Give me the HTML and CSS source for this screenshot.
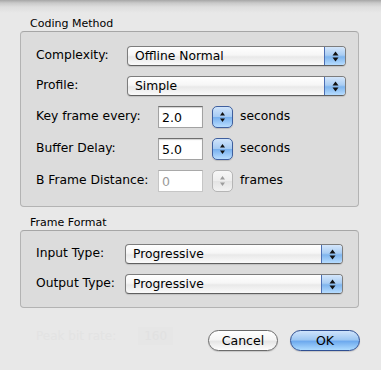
FILE: index.html
```html
<!DOCTYPE html>
<html>
<head>
<meta charset="utf-8">
<link rel="stylesheet" href="styles.css">
</head>
<body>
<div class="page">
  <div class="group-title">Coding Method</div>
  <div class="group g1">
    <div class="row">
      <span class="label w91">Complexity:</span>
      <div class="popup"><span class="popup-text">Offline Normal</span><span class="popup-arrows"><svg width="7" height="11" viewBox="0 0 7 11"><polygon points="3.5,0.5 6.5,4.5 0.5,4.5"/><polygon points="0.5,6.5 6.5,6.5 3.5,10.5"/></svg></span></div>
    </div>
    <div class="row">
      <span class="label w91">Profile:</span>
      <div class="popup"><span class="popup-text">Simple</span><span class="popup-arrows"><svg width="7" height="11" viewBox="0 0 7 11"><polygon points="3.5,0.5 6.5,4.5 0.5,4.5"/><polygon points="0.5,6.5 6.5,6.5 3.5,10.5"/></svg></span></div>
    </div>
    <div class="row tall">
      <span class="label w122">Key frame every:</span>
      <div class="field">2.0</div>
      <div class="stepper"><svg width="7" height="12" viewBox="0 0 7 12"><polygon points="3.5,1 6,4.5 1,4.5"/><polygon points="1,7.5 6,7.5 3.5,11"/></svg></div>
      <span class="unit">seconds</span>
    </div>
    <div class="row tall">
      <span class="label w122">Buffer Delay:</span>
      <div class="field">5.0</div>
      <div class="stepper"><svg width="7" height="12" viewBox="0 0 7 12"><polygon points="3.5,1 6,4.5 1,4.5"/><polygon points="1,7.5 6,7.5 3.5,11"/></svg></div>
      <span class="unit">seconds</span>
    </div>
    <div class="row tall">
      <span class="label w122">B Frame Distance:</span>
      <div class="field disabled">0</div>
      <div class="stepper disabled"><svg width="7" height="12" viewBox="0 0 7 12"><polygon points="3.5,1 6,4.5 1,4.5"/><polygon points="1,7.5 6,7.5 3.5,11"/></svg></div>
      <span class="unit">frames</span>
    </div>
  </div>

  <div class="group-title second">Frame Format</div>
  <div class="group g2">
    <div class="row">
      <span class="label w89">Input Type:</span>
      <div class="popup"><span class="popup-text">Progressive</span><span class="popup-arrows"><svg width="7" height="11" viewBox="0 0 7 11"><polygon points="3.5,0.5 6.5,4.5 0.5,4.5"/><polygon points="0.5,6.5 6.5,6.5 3.5,10.5"/></svg></span></div>
    </div>
    <div class="row">
      <span class="label w89">Output Type:</span>
      <div class="popup"><span class="popup-text">Progressive</span><span class="popup-arrows"><svg width="7" height="11" viewBox="0 0 7 11"><polygon points="3.5,0.5 6.5,4.5 0.5,4.5"/><polygon points="0.5,6.5 6.5,6.5 3.5,10.5"/></svg></span></div>
    </div>
  </div>

  <div class="footer">
    <div class="ghost">
      <span class="ghost-label">Peak bit rate:</span>
      <span class="ghost-field">160</span>
    </div>
    <div class="buttons">
      <button class="btn">Cancel</button>
      <button class="btn default">OK</button>
    </div>
  </div>
</div>
</body>
</html>
```
FILE: styles.css
```css
html, body {
  margin: 0;
  padding: 0;
}
body {
  width: 381px;
  height: 370px;
  overflow: hidden;
  background: linear-gradient(#a6a6a6 0px, #c9c9c9 3px, #dedede 7px, #e8e8e8 13px, #e8e8e8 100%);
  font-family: "DejaVu Sans", "Liberation Sans", sans-serif;
  color: #000;
}
.page {
  padding: 17px 22px 0 20px;
}
.group-title {
  font-size: 11px;
  line-height: 13px;
  height: 13px;
  margin: 0 0 1px 10px;
}
.group-title.second {
  margin-top: 9px;
}
.group {
  border: 1px solid #b3b3b3;
  border-top-color: #a6a6a6;
  border-radius: 4px;
  background: #dcdcdc;
  display: flex;
  flex-direction: column;
  gap: 10px;
}
.g1 {
  padding: 14px 12px 14px 15px;
}
.g2 {
  padding: 13px 15px 13px 15px;
}
.row {
  display: flex;
  align-items: center;
  height: 20px;
  font-size: 12.3px;
}
.row.tall {
  height: 22px;
}
.label {
  flex: none;
  position: relative;
  top: -1px;
}
.w91 { width: 91px; }
.w89 { width: 89px; }
.w122 { width: 122px; }

.popup {
  flex: 1;
  display: flex;
  height: 20px;
  box-sizing: border-box;
  border: 1px solid #7d7d7d;
  border-bottom-color: #5f5f5f;
  border-radius: 4px;
  overflow: hidden;
  background: linear-gradient(#ffffff 0%, #f6f6f6 45%, #e9e9e9 55%, #fafafa 100%);
  box-shadow: 0 1px 1px rgba(0, 0, 0, 0.12);
}
.popup-text {
  flex: 1;
  padding-left: 7px;
  line-height: 18px;
}
.popup-arrows {
  width: 20px;
  flex: none;
  display: flex;
  align-items: center;
  justify-content: center;
  border-left: 1px solid #4c6fb3;
  background: linear-gradient(#d4e6fb 0%, #a9cdf3 45%, #7fb5ee 55%, #b6dcff 100%);
}
.popup-arrows svg polygon,
.stepper svg polygon {
  fill: #111;
}

.field {
  width: 45px;
  height: 22px;
  box-sizing: border-box;
  flex: none;
  background: #fff;
  border: 1px solid #a2a2a2;
  border-top-color: #6e6e6e;
  box-shadow: inset 0 1px 1px rgba(0, 0, 0, 0.18);
  padding-left: 3px;
  line-height: 21px;
  font-size: 12.5px;
}
.field.disabled {
  color: #9a9a9a;
  border-color: #c6c6c6;
  border-top-color: #a9a9a9;
  box-shadow: none;
}
.stepper {
  width: 21px;
  height: 22px;
  box-sizing: border-box;
  flex: none;
  margin-left: 9px;
  border: 1px solid #3f5f9e;
  border-radius: 5px;
  background: linear-gradient(#d0e4fb 0%, #a6cbf3 48%, #78b0ee 52%, #b8ddff 100%);
  display: flex;
  align-items: center;
  justify-content: center;
  box-shadow: 0 1px 1px rgba(0, 0, 0, 0.15);
}
.stepper.disabled {
  border-color: #b5b5b5;
  background: linear-gradient(#f7f7f7 0%, #eeeeee 48%, #e4e4e4 52%, #f2f2f2 100%);
  box-shadow: none;
}
.stepper.disabled svg polygon {
  fill: #9c9c9c;
}
.unit {
  margin-left: 7px;
  position: relative;
  top: -1px;
}

.footer {
  display: flex;
  justify-content: space-between;
  align-items: center;
  margin-top: 22px;
  margin-right: -1px;
  height: 21px;
}
.ghost {
  display: flex;
  align-items: center;
  margin-left: 16px;
  margin-top: -10px;
  font-size: 12px;
  color: #e3e3e3;
}
.ghost-field {
  margin-left: 22px;
  padding: 2px 6px;
  background: #e6e6e6;
  color: #e1e1e1;
}
.buttons {
  display: flex;
  gap: 12px;
}
.btn {
  width: 70px;
  height: 21px;
  box-sizing: border-box;
  border: 1px solid #6b6b6b;
  border-radius: 11px;
  background: linear-gradient(#ffffff 0%, #f5f5f5 45%, #e6e6e6 55%, #fdfdfd 100%);
  font-family: "DejaVu Sans", sans-serif;
  font-size: 12.5px;
  color: #000;
  padding: 0;
  line-height: 19px;
  box-shadow: 0 1px 1px rgba(0, 0, 0, 0.15);
}
.btn.default {
  border-color: #2f4f92;
  background: linear-gradient(#cfe3fb 0%, #9fc8f3 45%, #6eaaee 55%, #addbff 100%);
}
```
